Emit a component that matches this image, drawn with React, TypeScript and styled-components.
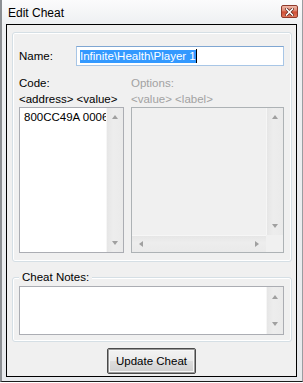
import React from "react";
import styled, { createGlobalStyle } from "styled-components";

const GlobalStyle = createGlobalStyle`
  html, body {
    margin: 0;
    padding: 0;
    background: #ffffff;
  }
  body {
    font-family: "Liberation Sans", Arial, sans-serif;
    font-size: 11.5px;
    color: #000000;
  }
`;

const Window = styled.div`
  width: 303px;
  height: 382px;
  box-sizing: border-box;
  display: flex;
  flex-direction: column;
  background: linear-gradient(to bottom, #fbfbfc 0px, #eef0f2 24px, #e7e9ec 100%);
  border-left: 2px solid #8c8f93;
  border-right: 1px solid #9a9da1;
  border-bottom: 1px solid #1c1c1c;
  padding: 0 5px 4px 4px;
`;

const TitleBar = styled.div`
  height: 24px;
  flex: none;
  display: flex;
  align-items: flex-start;
  justify-content: space-between;
  margin-right: -1px;
`;

const Title = styled.span`
  margin: 5px 0 0 2px;
  font-size: 12px;
  line-height: 16px;
  color: #000000;
`;

const CloseButton = styled.div`
  margin-top: 5px;
  width: 17px;
  height: 13px;
  box-sizing: border-box;
  border: 1px solid #8e3a2c;
  border-radius: 2px;
  background: linear-gradient(to bottom, #efb9aa 0%, #e08a75 40%, #cf4e36 55%, #e0765c 100%);
  display: flex;
  align-items: center;
  justify-content: center;
`;

const Client = styled.div`
  flex: 1;
  display: flex;
  flex-direction: column;
  align-items: stretch;
  border: 1px solid #000000;
  background: #f0f0f0;
  padding: 7px 4px 2px 5px;
`;

const Group = styled.div`
  height: 230px;
  box-sizing: border-box;
  border: 1px solid #d5dfe5;
  border-radius: 3px;
  box-shadow: inset 0 0 0 1px #ffffff;
  padding: 13px 7px 8px 6px;
  display: flex;
  flex-direction: column;
`;

const NameRow = styled.div`
  display: flex;
  align-items: center;
  height: 20px;
`;

const Label = styled.span<{ $disabled?: boolean }>`
  display: block;
  line-height: 16px;
  white-space: nowrap;
  color: ${(p) => (p.$disabled ? "#a2a2a2" : "#000000")};
`;

const NameLabel = styled(Label)`
  width: 57px;
  flex: none;
`;

const TextBox = styled.div`
  flex: 1;
  height: 20px;
  box-sizing: border-box;
  border: 1px solid #a8c6e6;
  border-top-color: #7fa6d2;
  background: #ffffff;
  padding: 0 0 0 3px;
  display: flex;
  align-items: center;
`;

const Selected = styled.span`
  display: inline-block;
  height: 13px;
  line-height: 13px;
  background: #3399ff;
  color: #ffffff;
  white-space: nowrap;
`;

const Caret = styled.span`
  display: inline-block;
  width: 1px;
  height: 14px;
  background: #000000;
`;

const Columns = styled.div`
  margin-top: 9px;
  flex: 1;
  display: grid;
  grid-template-columns: 105px 1fr;
  column-gap: 7px;
  min-height: 0;
`;

const Column = styled.div`
  display: flex;
  flex-direction: column;
  min-height: 0;
`;

const ListBox = styled.div<{ $disabled?: boolean }>`
  flex: 1;
  box-sizing: border-box;
  border: 1px solid ${(p) => (p.$disabled ? "#adb2b5" : "#abadb3")};
  background: ${(p) => (p.$disabled ? "#f0f0f0" : "#ffffff")};
  display: grid;
  grid-template-columns: 1fr 17px;
  grid-template-rows: ${(p) => (p.$disabled ? "1fr 17px" : "1fr")};
  min-height: 0;
  overflow: hidden;
`;

const ListText = styled.div`
  padding: 2px 0 0 4px;
  line-height: 15px;
  white-space: nowrap;
  overflow: hidden;
`;

const ScrollV = styled.div`
  box-sizing: border-box;
  background: linear-gradient(to right, #e6e6e6, #ededed 40%, #eaeaea);
  border-left: 1px solid #f6f6f6;
  display: flex;
  flex-direction: column;
  justify-content: space-between;
  align-items: center;
  padding: 7px 0;
`;

const ScrollH = styled.div`
  box-sizing: border-box;
  background: linear-gradient(to bottom, #e6e6e6, #ededed 40%, #eaeaea);
  border-top: 1px solid #f6f6f6;
  display: flex;
  justify-content: space-between;
  align-items: center;
  padding: 0 7px 0 7px;
`;

const Corner = styled.div`
  background: #f0f0f0;
`;

const Arrow = styled.span<{ $dir: "up" | "down" | "left" | "right" }>`
  width: 0;
  height: 0;
  border-style: solid;
  border-color: transparent;
  ${(p) =>
    p.$dir === "up"
      ? "border-width: 0 3.5px 4px 3.5px; border-bottom-color: #a0a0a0;"
      : p.$dir === "down"
      ? "border-width: 4px 3.5px 0 3.5px; border-top-color: #a0a0a0;"
      : p.$dir === "left"
      ? "border-width: 3.5px 4px 3.5px 0; border-right-color: #a0a0a0;"
      : "border-width: 3.5px 0 3.5px 4px; border-left-color: #a0a0a0;"}
`;

const NotesGroup = styled.fieldset`
  margin: 8px 0 0 0;
  height: 72px;
  box-sizing: border-box;
  border: 1px solid #d5dfe5;
  border-radius: 3px;
  box-shadow: inset 0 0 0 1px #ffffff;
  padding: 1px 7px 6px 6px;
  min-width: 0;
`;

const Legend = styled.legend`
  padding: 0 3px;
  line-height: 15px;
  background: #f0f0f0;
`;

const NotesBox = styled.div`
  height: 49px;
  box-sizing: border-box;
  border: 1px solid #abadb3;
  background: #ffffff;
  display: grid;
  grid-template-columns: 1fr 17px;
`;

const NotesScroll = styled(ScrollV)`
  padding: 8px 0;
`;

const Footer = styled.div`
  margin-top: 6px;
  display: flex;
  justify-content: center;
  padding-right: 1px;
`;

const Button = styled.div`
  width: 89px;
  height: 26px;
  box-sizing: border-box;
  border: 1px solid #4a4a4a;
  border-radius: 2px;
  box-shadow: inset 0 0 0 1px #9a9a9a, inset 0 0 0 2px #f7f7f7;
  background: linear-gradient(to bottom, #f3f3f3 0%, #ebebeb 48%, #dddddd 52%, #cfcfcf 100%);
  display: flex;
  align-items: center;
  justify-content: center;
  line-height: 16px;
`;

function CloseGlyph() {
  return (
    <svg width="9" height="8" viewBox="0 0 9 8">
      <path d="M1.5 1 L7.5 7 M7.5 1 L1.5 7" stroke="#5a1f16" strokeWidth="3" strokeLinecap="square" />
      <path d="M1.5 1 L7.5 7 M7.5 1 L1.5 7" stroke="#ffffff" strokeWidth="1.6" strokeLinecap="square" />
    </svg>
  );
}

export default function App() {
  return (
    <>
      <GlobalStyle />
      <Window>
        <TitleBar>
          <Title>Edit Cheat</Title>
          <CloseButton>
            <CloseGlyph />
          </CloseButton>
        </TitleBar>
        <Client>
          <Group>
            <NameRow>
              <NameLabel>Name:</NameLabel>
              <TextBox>
                <Selected>Infinite\Health\Player 1</Selected>
                <Caret />
              </TextBox>
            </NameRow>
            <Columns>
              <Column>
                <Label>Code:</Label>
                <Label>&lt;address&gt; &lt;value&gt;</Label>
                <ListBox>
                  <ListText>800CC49A 0006</ListText>
                  <ScrollV>
                    <Arrow $dir="up" />
                    <Arrow $dir="down" />
                  </ScrollV>
                </ListBox>
              </Column>
              <Column>
                <Label $disabled>Options:</Label>
                <Label $disabled>&lt;value&gt; &lt;label&gt;</Label>
                <ListBox $disabled>
                  <div />
                  <ScrollV>
                    <Arrow $dir="up" />
                    <Arrow $dir="down" />
                  </ScrollV>
                  <ScrollH>
                    <Arrow $dir="left" />
                    <Arrow $dir="right" />
                  </ScrollH>
                  <Corner />
                </ListBox>
              </Column>
            </Columns>
          </Group>
          <NotesGroup>
            <Legend>Cheat Notes:</Legend>
            <NotesBox>
              <div />
              <NotesScroll>
                <Arrow $dir="up" />
                <Arrow $dir="down" />
              </NotesScroll>
            </NotesBox>
          </NotesGroup>
          <Footer>
            <Button>Update Cheat</Button>
          </Footer>
        </Client>
      </Window>
    </>
  );
}
